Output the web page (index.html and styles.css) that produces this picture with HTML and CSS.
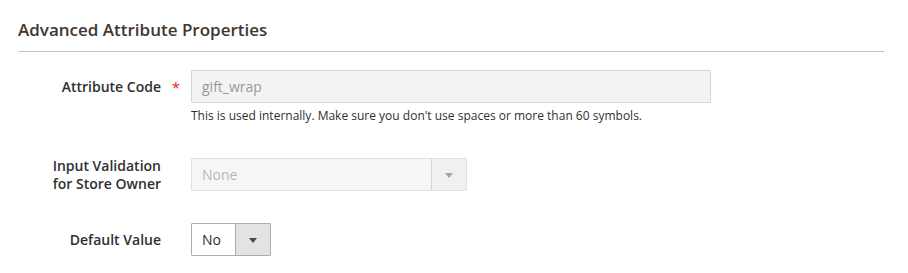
FILE: index.html
```html
<!DOCTYPE html>
<html lang="en">
<head>
  <meta charset="UTF-8">
  <title>Advanced Attribute Properties</title>
  <link rel="stylesheet" href="styles.css">
</head>
<body>
  <div class="fieldset-wrapper">
    <div class="fieldset-title">
      <strong>Advanced Attribute Properties</strong>
    </div>

    <div class="fieldset">
      <!-- Attribute code -->
      <div class="field required">
        <label class="field-label" for="attribute_code"><span>Attribute Code</span></label>
        <div class="field-control">
          <input class="input-text" id="attribute_code" type="text" value="gift_wrap" disabled>
          <div class="field-note">This is used internally. Make sure you don't use spaces or more than 60 symbols.</div>
        </div>
      </div>

      <!-- Input validation -->
      <div class="field">
        <label class="field-label" for="frontend_class"><span>Input Validation<br>for Store Owner</span></label>
        <div class="field-control">
          <div class="select-wrap select-wide disabled">
            <select id="frontend_class" disabled>
              <option>None</option>
            </select>
            <span class="select-arrow"></span>
          </div>
        </div>
      </div>

      <!-- Default value -->
      <div class="field">
        <label class="field-label" for="default_value"><span>Default Value</span></label>
        <div class="field-control">
          <div class="select-wrap select-small">
            <select id="default_value">
              <option>No</option>
              <option>Yes</option>
            </select>
            <span class="select-arrow"></span>
          </div>
        </div>
      </div>
    </div>
  </div>
</body>
</html>
```

FILE: styles.css
```css
body {
  margin: 0;
  padding: 0;
  font-family: "Open Sans", "Liberation Sans", Arial, sans-serif;
  color: #303030;
  background: #ffffff;
}

.fieldset-wrapper {
  width: 866px;
  margin-left: 18px;
}

.fieldset-title {
  padding: 20px 0 11px;
  border-bottom: 1px solid #cac3b4;
}

.fieldset-title strong {
  display: block;
  font-size: 17px;
  font-weight: 600;
  line-height: 20px;
  color: #41362f;
}

.fieldset {
  padding-top: 18px;
}

.field {
  display: flex;
  align-items: flex-start;
  margin-bottom: 32px;
}

.field:last-child {
  margin-bottom: 0;
}

.field-label {
  position: relative;
  width: 143px;
  height: 33px;
  padding-right: 30px;
  display: flex;
  align-items: center;
  justify-content: flex-end;
  text-align: right;
  font-size: 14px;
  font-weight: 600;
  line-height: 18px;
  color: #303030;
}

.field.required .field-label span::after {
  content: "*";
  position: absolute;
  right: 11px;
  top: 8px;
  font-size: 15px;
  font-weight: 400;
  line-height: 18px;
  color: #e22626;
}

.field-control {
  flex: 1;
}

.input-text {
  box-sizing: border-box;
  display: block;
  width: 520px;
  height: 33px;
  margin: 0;
  padding: 0 10px;
  border: 1px solid #adadad;
  border-radius: 1px;
  background: #ffffff;
  font-family: inherit;
  font-size: 14px;
  color: #303030;
}

.input-text:disabled {
  background: #e9e9e9;
  opacity: 0.5;
}

.field-note {
  margin: 4px 0 1px;
  font-size: 12px;
  line-height: 18px;
  color: #303030;
}

.select-wrap {
  position: relative;
  box-sizing: border-box;
  height: 33px;
}

.select-wide {
  width: 276px;
}

.select-small {
  width: 80px;
}

.select-wrap select {
  -webkit-appearance: none;
  appearance: none;
  box-sizing: border-box;
  display: block;
  width: 100%;
  height: 33px;
  margin: 0;
  padding: 0 40px 0 10px;
  border: 1px solid #adadad;
  border-radius: 1px;
  background: #ffffff;
  font-family: inherit;
  font-size: 14px;
  color: #303030;
  outline: none;
}

.select-arrow {
  position: absolute;
  top: 1px;
  right: 1px;
  bottom: 1px;
  width: 34px;
  border-left: 1px solid #adadad;
  background: #e3e3e3;
  pointer-events: none;
}

.select-arrow::after {
  content: "";
  position: absolute;
  left: 13px;
  top: 14px;
  border-left: 4px solid transparent;
  border-right: 4px solid transparent;
  border-top: 5px solid #514943;
}

.select-wrap.disabled {
  opacity: 0.5;
}

.select-wrap.disabled select {
  background: #e9e9e9;
}
```
